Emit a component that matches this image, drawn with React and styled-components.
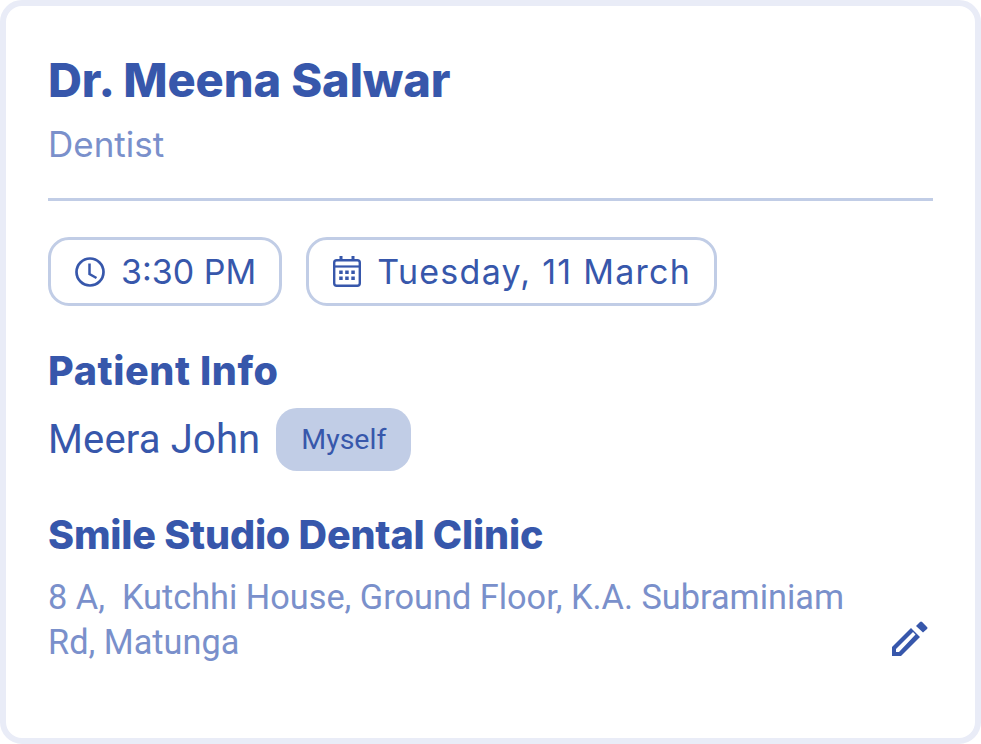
import React from "react";
import styled, { createGlobalStyle } from "styled-components";

const GlobalStyle = createGlobalStyle`
  html, body {
    margin: 0;
    padding: 0;
    background: #fff;
  }
  * {
    box-sizing: border-box;
  }
`;

const Card = styled.div`
  width: 981px;
  height: 744px;
  border: 6px solid #e9ecf7;
  border-radius: 22px;
  background: #fff;
  padding: 46px 42px 0 42px;
  color: #3757ab;
  font-family: "Roboto", "Liberation Sans", sans-serif;
`;

const Name = styled.h1`
  margin: 0;
  font-family: "Inter", "Liberation Sans", sans-serif;
  font-size: 47px;
  line-height: 56px;
  font-weight: 800;
  letter-spacing: -0.1px;
`;

const Speciality = styled.div`
  margin-top: 16px;
  font-family: "Inter", "Liberation Sans", sans-serif;
  font-size: 35px;
  line-height: 40px;
  color: #7a90cb;
`;

const Divider = styled.div`
  height: 3px;
  margin-top: 34px;
  background: #c1cde6;
`;

const PillRow = styled.div`
  display: flex;
  gap: 24px;
  margin-top: 36px;
`;

const Pill = styled.div`
  display: flex;
  align-items: center;
  gap: 16px;
  height: 69px;
  padding: 0 23px 0 24px;
  border: 3px solid #c1cde6;
  border-radius: 21px;
  font-family: "Inter", "Liberation Sans", sans-serif;
  font-size: 34px;
  letter-spacing: ${(p) => p.$spacing || 0}px;
`;

const SectionTitle = styled.h2`
  margin: ${(p) => p.$top}px 0 0;
  font-family: "Inter", "Liberation Sans", sans-serif;
  font-size: 39.5px;
  line-height: 48px;
  font-weight: 800;
  letter-spacing: ${(p) => p.$spacing}px;
`;

const PatientRow = styled.div`
  display: flex;
  align-items: center;
  gap: 16px;
  margin-top: 13px;
`;

const PatientName = styled.span`
  font-size: 40px;
  line-height: 63px;
  letter-spacing: 0.15px;
`;

const Badge = styled.span`
  display: flex;
  align-items: center;
  justify-content: center;
  width: 135px;
  height: 63px;
  border-radius: 21px;
  background: #c1cde6;
  font-size: 28.5px;
`;

const AddressRow = styled.div`
  display: flex;
  justify-content: space-between;
  align-items: flex-end;
  margin-top: 16px;
`;

const Address = styled.div`
  width: 810px;
  font-size: 34.3px;
  line-height: 45px;
  color: #7a90cb;
`;

const EditIcon = styled.svg`
  display: block;
  margin: 0 5px 7px 0;
`;

const ClockIcon = () => (
  <svg width="30" height="30" viewBox="0 0 30 30" fill="none" stroke="#3757ab">
    <circle cx="15" cy="15" r="13.500" strokeWidth="2.700" />
    <path d="M14.500 6.500V17L21.500 21" strokeWidth="2.500" />
  </svg>
);

const CalendarIcon = () => (
  <svg width="28" height="31" viewBox="0 0 28 31" fill="none" stroke="#3757ab">
    <rect x="1.200" y="4.200" width="25.600" height="25.600" rx="2.500" strokeWidth="2.400" />
    <path d="M1.200 10.500H26.800" strokeWidth="2.200" />
    <path d="M8 0V4M20 0V4" strokeWidth="3" />
    <g fill="#3757ab" stroke="none">
      <rect x="6.200" y="14.500" width="3.500" height="3.500" />
      <rect x="12.200" y="14.500" width="3.500" height="3.500" />
      <rect x="18.300" y="14.500" width="3.500" height="3.500" />
      <rect x="6.200" y="20.500" width="3.500" height="3.500" />
      <rect x="12.200" y="20.500" width="3.500" height="3.500" />
      <rect x="18.300" y="20.500" width="3.500" height="3.500" />
    </g>
  </svg>
);

const PencilIcon = () => (
  <EditIcon width="38" height="38" viewBox="0 0 38 38" fill="#3757ab">
    <path
      fillRule="evenodd"
      d="M21 8 30 17 11 36H2V27ZM23 12 6 29V32H9L25.500 14.500Z"
    />
    <path d="M26 6 30 2a1.500 1.500 0 0 1 2.100 0L37 7a1.500 1.500 0 0 1 0 2.100L33 12.500Z" />
  </EditIcon>
);

export default function App() {
  return (
    <>
      <GlobalStyle />
      <Card>
        <Name>Dr. Meena Salwar</Name>
        <Speciality>Dentist</Speciality>
        <Divider />
        <PillRow>
          <Pill>
            <ClockIcon />
            3:30 PM
          </Pill>
          <Pill $spacing={1.25}>
            <CalendarIcon />
            Tuesday, 11 March
          </Pill>
        </PillRow>
        <SectionTitle $top={41} $spacing={0.6}>Patient Info</SectionTitle>
        <PatientRow>
          <PatientName>Meera John</PatientName>
          <Badge>Myself</Badge>
        </PatientRow>
        <SectionTitle $top={40} $spacing={-0.2}>Smile Studio Dental Clinic</SectionTitle>
        <AddressRow>
          <Address>8 A,&nbsp; Kutchhi House, Ground Floor, K.A. Subraminiam Rd, Matunga</Address>
          <PencilIcon />
        </AddressRow>
      </Card>
    </>
  );
}
